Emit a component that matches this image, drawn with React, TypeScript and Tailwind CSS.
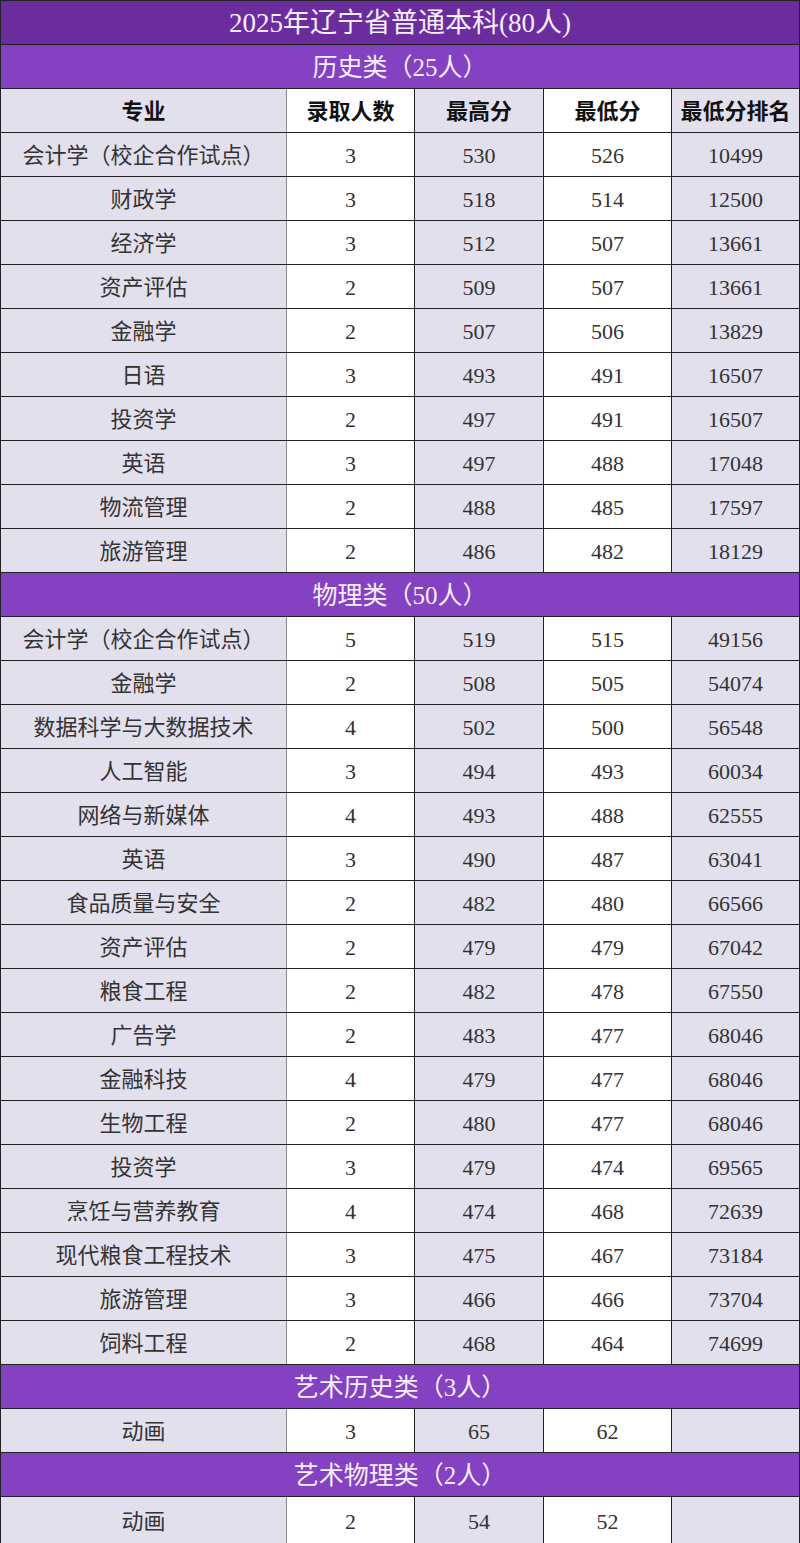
import React from "react";

type Row = [string, string, string, string, string];

const history: Row[] = [
  ["会计学（校企合作试点）", "3", "530", "526", "10499"],
  ["财政学", "3", "518", "514", "12500"],
  ["经济学", "3", "512", "507", "13661"],
  ["资产评估", "2", "509", "507", "13661"],
  ["金融学", "2", "507", "506", "13829"],
  ["日语", "3", "493", "491", "16507"],
  ["投资学", "2", "497", "491", "16507"],
  ["英语", "3", "497", "488", "17048"],
  ["物流管理", "2", "488", "485", "17597"],
  ["旅游管理", "2", "486", "482", "18129"],
];

const physics: Row[] = [
  ["会计学（校企合作试点）", "5", "519", "515", "49156"],
  ["金融学", "2", "508", "505", "54074"],
  ["数据科学与大数据技术", "4", "502", "500", "56548"],
  ["人工智能", "3", "494", "493", "60034"],
  ["网络与新媒体", "4", "493", "488", "62555"],
  ["英语", "3", "490", "487", "63041"],
  ["食品质量与安全", "2", "482", "480", "66566"],
  ["资产评估", "2", "479", "479", "67042"],
  ["粮食工程", "2", "482", "478", "67550"],
  ["广告学", "2", "483", "477", "68046"],
  ["金融科技", "4", "479", "477", "68046"],
  ["生物工程", "2", "480", "477", "68046"],
  ["投资学", "3", "479", "474", "69565"],
  ["烹饪与营养教育", "4", "474", "468", "72639"],
  ["现代粮食工程技术", "3", "475", "467", "73184"],
  ["旅游管理", "3", "466", "466", "73704"],
  ["饲料工程", "2", "468", "464", "74699"],
];

const cellBg = [
  "w-[286px] bg-[#e3e0ee] border-r border-r-[#8a8a8a]",
  "w-[128px] bg-white border-r border-r-[#222]",
  "w-[129px] bg-[#e3e0ee] border-r border-r-[#222]",
  "w-[128px] bg-white border-r border-r-[#222]",
  "flex-1 bg-[#e3e0ee]",
];

function DataRow({ row, bold, last }: { row: Row; bold?: boolean; last?: boolean }) {
  return (
    <div className={`flex ${last ? "h-[46px]" : "h-[44px] border-b border-b-[#222]"}`}>
      {row.map((text, i) => (
        <div
          key={i}
          className={`${cellBg[i]} flex items-center justify-center pt-[2px] text-[22px] ${
            bold ? "font-bold text-[#111]" : "text-[#333]"
          }`}
        >
          {text}
        </div>
      ))}
    </div>
  );
}

function Section({ title }: { title: string }) {
  return (
    <div className="flex h-[44px] items-center justify-center border-b border-b-[#222] bg-[#8441c2] pt-[2px] text-[25px] text-[#f6eefc]">
      {title}
    </div>
  );
}

export default function App() {
  return (
    <div
      className="w-[800px] border-x border-[#222] bg-white"
      style={{ fontFamily: '"Liberation Serif", "Noto Sans CJK SC", serif' }}
    >
      <div className="flex h-[45px] items-center justify-center border-y border-[#222] bg-[#6b2d9e] pt-[2px] text-[27px] text-[#f6eefc]">
        2025年辽宁省普通本科(80人)
      </div>
      <Section title="历史类（25人）" />
      <DataRow row={["专业", "录取人数", "最高分", "最低分", "最低分排名"]} bold />
      {history.map((r, i) => (
        <DataRow key={i} row={r} />
      ))}
      <Section title="物理类（50人）" />
      {physics.map((r, i) => (
        <DataRow key={i} row={r} />
      ))}
      <Section title="艺术历史类（3人）" />
      <DataRow row={["动画", "3", "65", "62", ""]} />
      <Section title="艺术物理类（2人）" />
      <DataRow row={["动画", "2", "54", "52", ""]} last />
    </div>
  );
}
